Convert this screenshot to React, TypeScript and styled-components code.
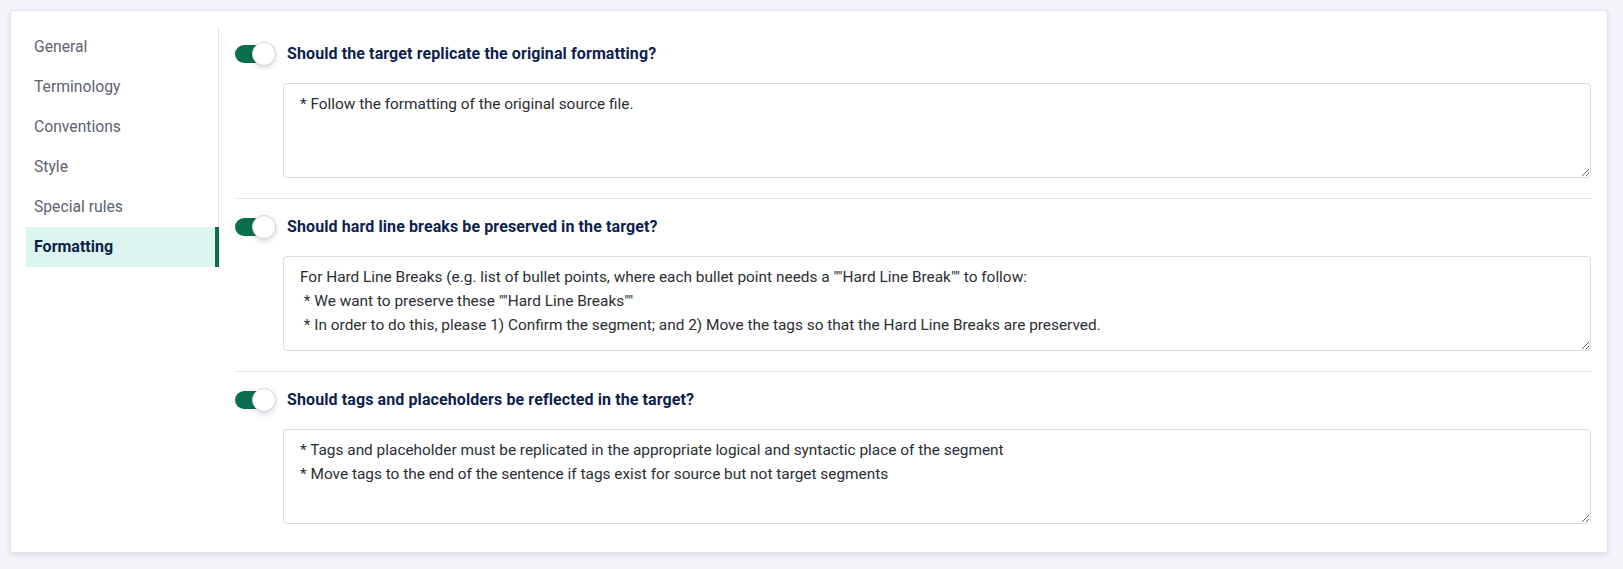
import React from "react";
import styled, { createGlobalStyle } from "styled-components";

const GlobalStyle = createGlobalStyle`
  html, body {
    margin: 0;
    padding: 0;
    background: #f4f5fa;
    font-family: Roboto, "Liberation Sans", Arial, sans-serif;
  }
  * { box-sizing: border-box; }
`;

const Page = styled.div`
  padding: 10px 15px 16px 10px;
`;

const Card = styled.div`
  display: flex;
  align-items: flex-start;
  background: #ffffff;
  border: 1px solid #e2e4ec;
  border-radius: 3px;
  box-shadow: 0 2px 5px rgba(40, 50, 100, 0.13);
  padding: 16px 0 8px 15px;
`;

const Nav = styled.nav`
  width: 193px;
  flex-shrink: 0;
  display: flex;
  flex-direction: column;
  border-right: 1px solid #e3e4e8;
`;

const NavItem = styled.div<{ $active?: boolean }>`
  height: 40px;
  line-height: 40px;
  padding-left: 8px;
  font-size: ${(p) => (p.$active ? "16px" : "15.7px")};
  color: ${(p) => (p.$active ? "#0d1f4c" : "#5d6370")};
  font-weight: ${(p) => (p.$active ? 700 : 400)};
  background: ${(p) => (p.$active ? "#dcf5f0" : "transparent")};
  border-right: 4px solid ${(p) => (p.$active ? "#0b6e4f" : "transparent")};
  margin-right: -1px;
`;

const Content = styled.div`
  flex: 1;
  padding: 0 16px;
  display: flex;
  flex-direction: column;
`;

const Section = styled.section`
  padding: 17px 0 20px;
  border-bottom: 1px solid #e3e4e8;
  &:first-child {
    padding-top: 16px;
  }
  &:last-child {
    border-bottom: none;
  }
`;

const HeadRow = styled.div`
  display: flex;
  align-items: center;
  gap: 11px;
  height: 22px;
  margin-bottom: 18px;
`;

const Switch = styled.div`
  position: relative;
  width: 41px;
  height: 24px;
  flex-shrink: 0;
`;

const Track = styled.div`
  position: absolute;
  left: 0;
  top: 3px;
  width: 36px;
  height: 18px;
  border-radius: 9px;
  background: #0b6e4f;
`;

const Knob = styled.div`
  position: absolute;
  left: 17px;
  top: 0;
  width: 24px;
  height: 24px;
  border-radius: 50%;
  background: #ffffff;
  border: 1px solid #d3d5dc;
  box-shadow: 0 2px 5px rgba(30, 40, 80, 0.18);
`;

const Heading = styled.h3`
  margin: 0;
  font-size: 16px;
  font-weight: 700;
  letter-spacing: 0.1px;
  color: #0d1f4c;
  line-height: 22px;
`;

const Field = styled.textarea`
  display: block;
  width: calc(100% - 48px);
  margin-left: 48px;
  height: 95px;
  padding: 8px 16px;
  border: 1px solid #dadce3;
  border-radius: 4px;
  font-family: Roboto, "Liberation Sans", Arial, sans-serif;
  font-size: 15.4px;
  line-height: 24px;
  color: #2a2e35;
  background: #fff;
  outline: none;
  resize: vertical;
`;

const navItems = [
  "General",
  "Terminology",
  "Conventions",
  "Style",
  "Special rules",
  "Formatting",
];

const sections = [
  {
    title: "Should the target replicate the original formatting?",
    text: "* Follow the formatting of the original source file.",
  },
  {
    title: "Should hard line breaks be preserved in the target?",
    text:
      'For Hard Line Breaks (e.g. list of bullet points, where each bullet point needs a ""Hard Line Break"" to follow:\n * We want to preserve these ""Hard Line Breaks""\n * In order to do this, please 1) Confirm the segment; and 2) Move the tags so that the Hard Line Breaks are preserved.',
  },
  {
    title: "Should tags and placeholders be reflected in the target?",
    text:
      "* Tags and placeholder must be replicated in the appropriate logical and syntactic place of the segment\n* Move tags to the end of the sentence if tags exist for source but not target segments",
  },
];

export default function App() {
  return (
    <>
      <GlobalStyle />
      <Page>
        <Card>
          <Nav>
            {navItems.map((n) => (
              <NavItem key={n} $active={n === "Formatting"}>
                {n}
              </NavItem>
            ))}
          </Nav>
          <Content>
            {sections.map((s) => (
              <Section key={s.title}>
                <HeadRow>
                  <Switch>
                    <Track />
                    <Knob />
                  </Switch>
                  <Heading>{s.title}</Heading>
                </HeadRow>
                <Field defaultValue={s.text} spellCheck={false} />
              </Section>
            ))}
          </Content>
        </Card>
      </Page>
    </>
  );
}
